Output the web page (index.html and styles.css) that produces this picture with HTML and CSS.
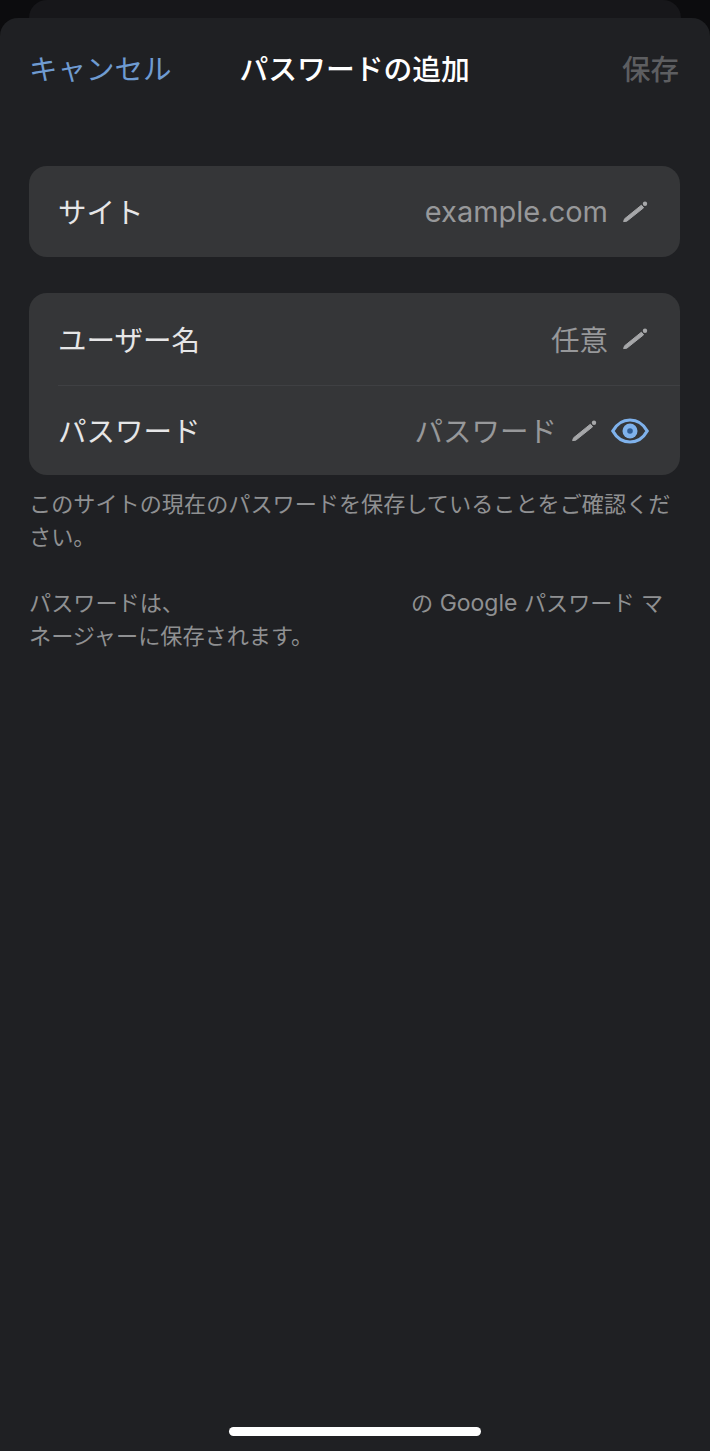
FILE: index.html
```html
<!DOCTYPE html>
<html lang="ja">

<head>
    <meta charset="UTF-8">
    <meta name="viewport" content="width=device-width, initial-scale=1.0">
    <title>パスワードの追加</title>
    <link rel="stylesheet" href="styles.css">
</head>

<body>
    <svg class="icon-defs" width="0" height="0">
        <symbol id="pencil" viewBox="0 0 28 24">
            <path d="M2.6 21.6 L3.6 18.8 L20.4 5.2 L22.6 7.8 L5.8 21.2 Z" fill="currentColor" stroke="currentColor" stroke-width="1" stroke-linejoin="round"/>
            <circle cx="24" cy="3.8" r="2.2" fill="currentColor"/>
        </symbol>
    </svg>

    <div class="back-sheet"></div>

    <div class="sheet">
        <div class="nav">
            <span class="nav-cancel">キャンセル</span>
            <span class="nav-title">パスワードの追加</span>
            <span class="nav-save">保存</span>
        </div>

        <div class="card card-site">
            <div class="row">
                <span class="row-label">サイト</span>
                <span class="row-value value-latin">example.com</span>
                <svg class="pencil"><use href="#pencil"/></svg>
            </div>
        </div>

        <div class="card">
            <div class="row row-divided">
                <span class="row-label">ユーザー名</span>
                <span class="row-value">任意</span>
                <svg class="pencil"><use href="#pencil"/></svg>
            </div>
            <div class="row row-last">
                <span class="row-label">パスワード</span>
                <span class="row-value">パスワード</span>
                <svg class="pencil"><use href="#pencil"/></svg>
                <svg class="eye" viewBox="0 0 38 26">
                    <path d="M1.8 13 C6 5.5 12 2 19 2 C26 2 32 5.5 36.2 13 C32 20.5 26 24 19 24 C12 24 6 20.5 1.8 13 Z" fill="none" stroke="currentColor" stroke-width="3.2"/>
                    <circle cx="19" cy="13" r="7.5" fill="currentColor"/>
                    <circle cx="19" cy="13" r="2.8" fill="#2f5c94"/>
                </svg>
            </div>
        </div>

        <p class="note note-confirm">このサイトの現在のパスワードを保存していることをご確認ください。</p>
        <p class="note note-account">
            <span>パスワードは、</span><span class="hidden-email"></span><span>の<span class="note-latin"> Google </span>パスワード<span class="note-latin"> </span>マ</span><br>
            <span>ネージャーに保存されます。</span>
        </p>

        <div class="home-bar"></div>
    </div>
</body>

</html>
```

FILE: styles.css
```css
body {
    font-family: Inter, "Noto Sans CJK JP", sans-serif;
    background-color: #0c0c0e;
    margin: 0;
    padding: 0;
    height: 1451px;
    display: flex;
    flex-direction: column;
    overflow: hidden;
}

.icon-defs {
    position: absolute;
}

.back-sheet {
    height: 18px;
    margin: 0 29px;
    background-color: #17171a;
    border-radius: 18px 18px 0 0;
    flex-shrink: 0;
}

.sheet {
    flex: 1;
    background-color: #1f2023;
    border-radius: 18px 18px 0 0;
    padding: 0 30px 0 29px;
    display: flex;
    flex-direction: column;
}

.nav {
    height: 98px;
    padding-bottom: 2px;
    display: flex;
    align-items: center;
    font-size: 28.5px;
    margin-bottom: 48px;
}

.nav-cancel {
    color: #6f9bd1;
}

.nav-title {
    color: #fff;
    font-weight: 500;
    font-size: 28.8px;
    margin-left: 68px;
}

.nav-save {
    color: #5d5e61;
    font-weight: 500;
    margin-left: auto;
    margin-right: 1px;
}

.card {
    background-color: #353638;
    border-radius: 18px;
}

.card-site {
    margin-bottom: 36px;
}

.row {
    height: 91px;
    display: flex;
    align-items: center;
    padding: 0 31px 0 29px;
    font-size: 28.5px;
}

.row-divided {
    height: 93px;
    margin-left: 29px;
    padding-left: 0;
    border-bottom: 1px solid #3f4043;
    box-sizing: border-box;
}

.row-last {
    height: 89px;
}

.row-label {
    color: #e6e6e7;
    flex: 1;
    padding-bottom: 2px;
}

.row-value {
    color: #97989a;
    padding-bottom: 2px;
}

.value-latin {
    font-size: 29px;
    padding-bottom: 0;
}

.pencil {
    width: 28px;
    height: 24px;
    margin-left: 13px;
    color: #a6a7a9;
}

.eye {
    width: 38px;
    height: 26px;
    margin-left: 13px;
    color: #7fb2ec;
}

.note {
    margin: 0;
    font-size: 22.15px;
    line-height: 33px;
    color: #8f9092;
}

.note-confirm {
    margin-top: 13px;
}

.note-account {
    margin-top: 33px;
}

.note-latin {
    font-size: 23px;
}

.hidden-email {
    display: inline-block;
    width: 227px;
}

.home-bar {
    width: 252px;
    height: 9px;
    background-color: #fff;
    border-radius: 5px;
    margin: auto 0 15px 200px;
}
```
